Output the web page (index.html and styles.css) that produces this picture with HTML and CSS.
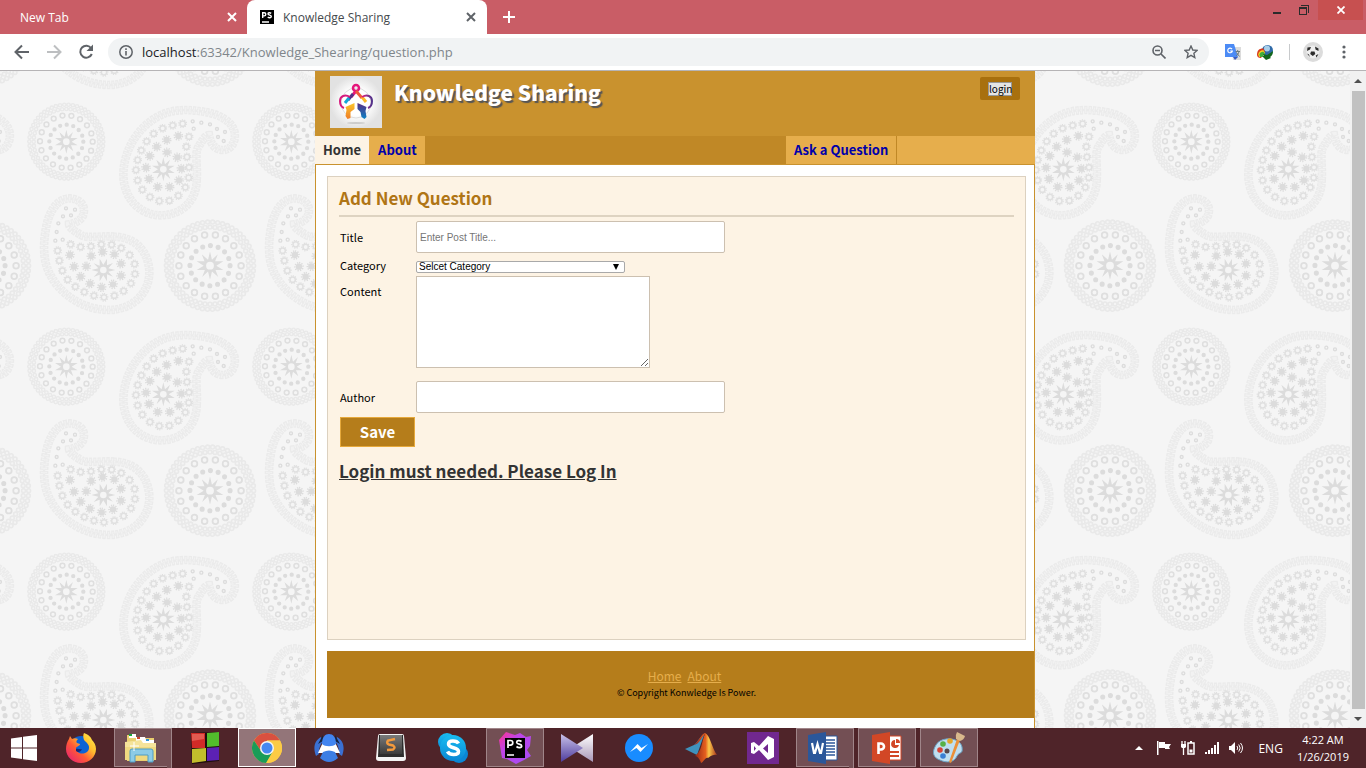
FILE: index.html
```html
<!DOCTYPE html>
<html lang="en">
<head>
<meta charset="utf-8">
<title>Knowledge Sharing</title>
<link rel="stylesheet" href="styles.css">
</head>
<body>
<header class="tabs">
  <div class="tab"><span>New Tab</span>
    <button class="icon-btn tab-close" aria-label="Close New Tab"><svg width="10" height="10" viewBox="0 0 10 10"><path d="M1 1l8 8M9 1L1 9" stroke="#fff" stroke-width="2"/></svg></button>
  </div>
  <div class="tab tab-active">
    <svg class="favicon" width="14" height="14" viewBox="0 0 14 14"><path d="M0 0h14v14H0z"/><path d="M2.700 8V2.700h1.500a1.600 1.600 0 0 1 0 3.200H2.700M11.200 3.400C9.800 2.300 8 2.600 8 3.900c.1 1.500 3.300 1 3.300 2.600 0 1.500-2.300 1.500-3.600.5M2 12h7" fill="none" stroke="#fff" stroke-width="1.400"/></svg>
    <span>Knowledge Sharing</span>
    <button class="icon-btn tab-close" aria-label="Close Knowledge Sharing"><svg width="10" height="10" viewBox="0 0 10 10"><path d="M1 1l8 8M9 1L1 9" stroke="#5f6368" stroke-width="2"/></svg></button>
  </div>
  <button class="icon-btn tab-new" aria-label="New tab"><svg width="12" height="12" viewBox="0 0 12 12"><path d="M6 0v12M0 6h12" stroke="#fff" stroke-width="2"/></svg></button>
  <div class="win-controls">
    <button class="icon-btn win-btn" aria-label="Minimize"><svg width="10" height="12" viewBox="0 0 10 12"><path d="M1 8h8v2H1z" fill="#2b2b2b"/></svg></button>
    <button class="icon-btn win-btn" aria-label="Restore"><svg width="10" height="10" viewBox="0 0 10 10"><path d="M0 2h8v8H0zM1 4v5h6V4zM2 0h8v8H9V1H2z" fill="#2b2b2b" fill-rule="evenodd"/></svg></button>
    <button class="icon-btn win-close" aria-label="Close"><svg width="8" height="8" viewBox="0 0 8 8"><path d="M.5.5l7 7M7.500.5l-7 7" stroke="#fff" stroke-width="1.800"/></svg></button>
  </div>
</header>
<nav class="toolbar" aria-label="Browser">
  <button class="icon-btn tool" aria-label="Back"><svg width="16" height="16" viewBox="0 0 16 16"><path d="M15 8H2M8 1.500L1.500 8 8 14.500" fill="none" stroke="#5f6368" stroke-width="2"/></svg></button>
  <button class="icon-btn tool" aria-label="Forward"><svg width="16" height="16" viewBox="0 0 16 16"><path d="M1 8h13M8 1.500L14.500 8 8 14.500" fill="none" stroke="#bdbfc1" stroke-width="2"/></svg></button>
  <button class="icon-btn tool" aria-label="Reload"><svg width="16" height="16" viewBox="0 0 16 16"><path d="M13.200 4.200A6 6 0 1 0 13.800 10" fill="none" stroke="#5f6368" stroke-width="2"/><path d="M15 .5v6.500H8.500z" fill="#5f6368"/></svg></button>
  <div class="omnibox">
    <svg width="14" height="14" viewBox="0 0 14 14"><circle cx="7" cy="7" r="6.200" fill="none" stroke="#5f6368" stroke-width="1.500"/><path d="M6.200 6h1.600v4.500H6.200zM6.200 3.300h1.600v1.600H6.200z" fill="#5f6368"/></svg>
    <div class="url"><span class="url-host">localhost</span>:63342/Knowledge_Shearing/question.php</div>
    <button class="icon-btn tool" aria-label="Zoom"><svg width="14" height="14" viewBox="0 0 14 14"><circle cx="5.500" cy="5.500" r="4.500" fill="none" stroke="#5f6368" stroke-width="1.600"/><path d="M3 5.500h5M9 9l4.500 4.500" stroke="#5f6368" stroke-width="1.600"/></svg></button>
    <button class="icon-btn tool" aria-label="Bookmark"><svg width="14" height="14" viewBox="0 0 14 14"><path d="M7 1l1.800 4 4.300.4-3.200 2.900.9 4.300L7 10.400l-3.800 2.200.9-4.300L.9 5.400 5.200 5z" fill="none" stroke="#5f6368" stroke-width="1.400"/></svg></button>
  </div>
  <div class="extensions">
    <button class="icon-btn tool" aria-label="Translate"><svg width="16" height="16" viewBox="0 0 16 16"><path d="M6 3h10v13H8z" fill="#dcdcdc"/><path d="M0 0h9l4 13H0z" fill="#4c8bf5"/><path d="M8 13h5l-3 3z" fill="#3a5bbd"/><path d="M7 5.200A2.300 2.300 0 1 0 7.300 7H5.200" fill="none" stroke="#fff" stroke-width="1.200"/><path d="M10.500 7.500H15M12.700 6v1.500M14 7.500c-.4 2-1.500 3.500-3 4.500M11.500 8.500l3 4" fill="none" stroke="#6f7c80" stroke-width="1"/></svg></button>
    <button class="icon-btn tool" aria-label="Download manager"><svg width="16" height="16" viewBox="0 0 16 16"><circle cx="10.500" cy="6.500" r="5.500" fill="#2f6aa8"/><circle cx="10" cy="4.500" r="3" fill="#a9cfea"/><path d="M0 10.500C0 6 3 4 6.500 4.500L8 8l-4 6C1.500 14 0 13 0 10.500z" fill="#d8391b"/><path d="M1.200 10.500C1.500 7.500 4 5.800 6.500 6.200L8 9l-3 4H2z" fill="#f4cf26"/><path d="M2.500 10.500C3 8.500 4.500 7.500 6.500 7.800L8 10l-3 3H3z" fill="#3fae3b"/><path d="M6 10l4 1 6-4c0 3-1 5-3 6l1 1-5 2-4-4 2 0z" fill="#12661c"/></svg></button>
    <span class="divider"></span>
    <button class="icon-btn avatar" aria-label="Profile"><svg width="20" height="20" viewBox="0 0 20 20"><circle cx="10" cy="10" r="10" fill="#dcdcdc"/><circle cx="10" cy="10" r="6.500" fill="#efefef"/><path d="M8 9.500h3.500l.8 2.500-2.500 2-2.600-2zM4.500 5.500L8 5 7 7.500 4 9zM12 4.500l3.500 2V9l-3-1.500zM4 11.500l2 1 .8 2.500zM15.500 12l-2 3.500-.8-2z" fill="#2d2d2d"/></svg></button>
    <button class="icon-btn tool" aria-label="Menu"><svg width="4" height="14" viewBox="0 0 4 14"><circle cx="2" cy="2" r="1.600" fill="#5f6368"/><circle cx="2" cy="7" r="1.600" fill="#5f6368"/><circle cx="2" cy="12" r="1.600" fill="#5f6368"/></svg></button>
  </div>
</nav>
<main class="viewport">
  <svg class="backdrop" aria-hidden="true">
    <defs>
      <path id="burst" d="M0-36L5-15 20-29 13-11 34-11 16 0 34 11 14 11 21 29 5 15 0 36-5 15-20 29-13 11-34 11-16 0-34-11-14-11-21-29-5-15z"/>
      <marker id="ringStar" markerUnits="userSpaceOnUse" markerWidth="28" markerHeight="28" viewBox="-14 -14 28 28" refX="0" refY="0"><circle r="8" fill="#f5f5f5" stroke="#e0e0e0" stroke-width="4.500"/><circle r="11.500" fill="none" stroke="#e0e0e0" stroke-width="4" stroke-dasharray="3.500 3.700"/></marker>
      <marker id="fullStar" markerUnits="userSpaceOnUse" markerWidth="32" markerHeight="32" viewBox="-16 -16 32 32" refX="0" refY="0"><circle r="9.500" fill="#dcdcdc"/><circle r="12" fill="none" stroke="#dcdcdc" stroke-width="5" stroke-dasharray="3.700 3.800"/></marker>
      <marker id="bead" markerUnits="userSpaceOnUse" markerWidth="16" markerHeight="16" viewBox="-8 -8 16 16" refX="0" refY="0"><circle r="4.500" fill="#f5f5f5" stroke="#dcdcdc" stroke-width="4"/></marker>
      <g id="wheel">
        <g fill="none" stroke-linecap="round">
          <circle r="111" stroke="#e9e9e9" stroke-width="14" pathLength="54" stroke-dasharray="0 1"/>
          <circle r="111" stroke="#f4f4f4" stroke-width="6" pathLength="54" stroke-dasharray="0 1"/>
          <circle r="98" stroke="#e9e9e9" stroke-width="14" pathLength="48" stroke-dasharray="0 1"/>
          <circle r="98" stroke="#f4f4f4" stroke-width="6" pathLength="48" stroke-dasharray="0 1"/>
          <circle r="79" stroke="#dfdfdf" stroke-width="19" pathLength="18" stroke-dasharray="0 1"/>
          <circle r="79" stroke="#f5f5f5" stroke-width="10" pathLength="18" stroke-dasharray="0 1"/>
          <circle r="51" stroke="#dcdcdc" stroke-width="13" pathLength="16" stroke-dasharray="0 1"/>
        </g>
        <use href="#burst" fill="#dcdcdc"/><circle r="10" fill="#f5f5f5"/>
      </g>
      <path id="drop" d="M590 330C594 290 582 245 597 228 607 210 618 195 627 195 632 222 645 240 669 240 693 240 708 216 704 188 698 153 655 132 615 126 585 120 555 119 540 121 450 125 372 213 370 312 370 392 426 436 483 436 546 435 590 392 590 330z"/>
      <g id="paisley">
        <g fill="none">
          <use href="#drop" stroke="#ebebeb" stroke-width="26" stroke-dasharray="10 3"/>
          <use href="#drop" stroke="#f5f5f5" stroke-width="4"/>
          <use href="#drop" stroke="#f2f2f2" stroke-width="18" stroke-dasharray="4 9" stroke-dashoffset="-3"/>
          <use href="#drop" stroke="#ebebeb" stroke-width="7" stroke-dasharray="9 4" stroke-dashoffset="5"/>
        </g>
        <path d="M548 161L518 166 488 175 461 191 440 214 424 241 413 270 408 300 413 331 427 359 450 381 478 393 508 392 535 377 556 352 566 323 567 292 561 261 559 230 567 200" fill="none" marker-start="url(#ringStar)" marker-mid="url(#ringStar)" marker-end="url(#ringStar)"/>
        <path d="M535 198L500 210 470 230 449 258 438 293 447 327 473 351 509 351 537 331 544 296 532 262 501 247" fill="none" marker-start="url(#fullStar)" marker-mid="url(#fullStar)" marker-end="url(#fullStar)"/>
        <path d="M581 176L578 154 604 158 630 163 651 177 675 186 671 213 654 201" fill="none" marker-start="url(#bead)" marker-mid="url(#bead)" marker-end="url(#bead)"/>
        <use href="#burst" x="490" y="298" fill="#dcdcdc"/><circle cx="490" cy="298" r="10" fill="#f5f5f5"/>
      </g>
      <g id="motif">
        <use href="#wheel" transform="translate(199 212)"/>
        <use href="#wheel" transform="translate(630 584) scale(1.180)"/>
        <use href="#paisley" y="-3"/>
        <use href="#paisley" transform="translate(310 597) rotate(-90) translate(-490 -298)"/>
      </g>
      <pattern id="tile" width="675" height="675" patternUnits="userSpaceOnUse" patternTransform="scale(.333333)">
        <use href="#motif"/><use href="#motif" x="-675"/><use href="#motif" y="-675"/><use href="#motif" x="-675" y="-675"/>
      </pattern>
    </defs>
    <rect width="100%" height="100%" fill="url(#tile)"/>
  </svg>
  <div class="scroll-area">
    <div class="site">
      <header class="site-header">
        <svg class="logo" width="52" height="52" viewBox="0 0 52 52" role="img" aria-label="Knowledge Sharing logo">
          <defs>
            <radialGradient id="lg"><stop offset=".5" stop-color="#fff"/><stop offset="1" stop-color="#e2e2e2"/></radialGradient>
            <linearGradient id="pk"><stop stop-color="#e5177b"/><stop offset=".5" stop-color="#8c2f8d"/><stop offset="1" stop-color="#51338a"/></linearGradient>
            <linearGradient id="or" x2="0" y2="1"><stop stop-color="#fbc52c"/><stop offset="1" stop-color="#ef7d27"/></linearGradient>
            <linearGradient id="bl" x2="0" y2="1"><stop stop-color="#582d83"/><stop offset="1" stop-color="#0b83c6"/></linearGradient>
          </defs>
          <path d="M0 0h52v52H0z" fill="url(#lg)"/><circle cx="26" cy="27" r="15" fill="none" stroke="#ddd"/>
          <ellipse cx="26" cy="47" rx="9" ry="1" fill="#ccc"/>
          <circle cx="26" cy="12" r="3" fill="none" stroke="#e5177b" stroke-width="2.500"/>
          <path d="M26 15l-5 6" stroke="#e5177b" stroke-width="3"/><path d="M23 18l-5 6" stroke="#51338a" stroke-width="3"/>
          <path d="M26 15l6 7" stroke="#f05a3c" stroke-width="3"/>
          <path d="M32 21l4 5" stroke="#fdb827" stroke-width="3"/><path d="M19 22l-4 5" stroke="#11a7d9" stroke-width="3"/>
          <path d="M20 21c-5-3-10-1-10 4 0 3 1 6 4 7" fill="none" stroke="#d51b7d" stroke-width="2"/>
          <path d="M32 21c5-3 10-1 10 4 0 3-1 6-4 7" fill="none" stroke="url(#pk)" stroke-width="2"/>
          <path d="M24.500 27v6l-4 3v6l-3 1-2-3 1-6-1-3z" fill="url(#or)"/><path d="M27.500 27l9 4-1 4 1 6-2 2-3-2-1-5-3-3z" fill="url(#bl)"/>
        </svg>
        <h1 class="site-title">Knowledge Sharing</h1>
        <div class="login-box"><button class="login-btn" type="button">login</button></div>
      </header>
      <nav class="site-nav" aria-label="Site">
        <a class="nav-item nav-current" href="#home">Home</a>
        <a class="nav-item" href="#about">About</a>
        <div class="nav-side"><a class="nav-item nav-ask" href="#ask">Ask a Question</a></div>
      </nav>
      <div class="site-body">
        <section class="panel">
          <h2 class="panel-title">Add New Question</h2>
          <form class="question-form">
            <label for="title">Title</label>
            <input class="field field-text" id="title" type="text" placeholder="Enter Post Title...">
            <label for="category">Category</label>
            <div class="select-wrap">
              <select class="field-select" id="category"><option>Selcet Category</option></select>
              <svg class="select-arrow" width="6" height="6" viewBox="0 0 6 6"><path d="M0 0h6L3 6z"/></svg>
            </div>
            <label class="label-top" for="content">Content</label>
            <textarea class="field field-area" id="content"></textarea>
            <label for="author">Author</label>
            <input class="field field-text" id="author" type="text">
            <button class="save" type="button">Save</button>
          </form>
          <a class="notice" href="#login">Login must needed. Please Log In</a>
        </section>
        <footer class="site-footer">
          <div class="footer-links"><a href="#home">Home</a><a href="#about">About</a></div>
          <p class="copyright">© Copyright Konwledge Is Power.</p>
        </footer>
      </div>
    </div>
  </div>
  <div class="scrollbar" aria-hidden="true">
    <svg width="8" height="4" viewBox="0 0 8 4"><path d="M0 4l4-4 4 4z" fill="#505050"/></svg>
    <span class="thumb"></span>
    <svg width="8" height="4" viewBox="0 0 8 4"><path d="M0 0h8L4 4z" fill="#505050"/></svg>
  </div>
</main>
<footer class="taskbar">
  <div class="apps">
    <button class="app app-start" aria-label="Start"><svg width="26" height="26" viewBox="0 0 26 26"><path d="M0 3.500L11 2v10.500H0zM12 1.800L26 0v12.500H12zM0 13.500h11V24L0 22.500zM12 13.500h14V26l-14-1.800z" fill="#fff"/></svg></button>
    <button class="app" aria-label="Firefox"><svg width="30" height="30" viewBox="0 0 30 30"><defs><linearGradient id="ff" x1="1" y1="0" x2="0" y2="1"><stop stop-color="#fff44f"/><stop offset=".35" stop-color="#ffbd2e"/><stop offset=".6" stop-color="#ff5a36"/><stop offset="1" stop-color="#e3157f"/></linearGradient></defs><circle cx="15" cy="14" r="11" fill="#0b63d6"/><path d="M18 0c5 2 7 4 8 7 2 2 4 5 4 9 0 8-7 14-15 14S0 24 0 16C0 12 1 9 3 6l1-3 2 3c2-1 4-1 6 0-2 2-2 3-1 4l3 1c0 2-3 2-4 4 0 5 7 8 12 3 3-5-1-8-4-11-1-3-1-5 0-7z" fill="url(#ff)"/><path d="M10 16c2-1 4 1 6 0-1 3-4 4-6 2z" fill="#15287a"/></svg></button>
    <button class="app app-open app-stack" aria-label="File Explorer"><svg width="32" height="30" viewBox="0 0 32 30"><path d="M2 2h8l2 3h17v23H2z" fill="#e9cf70"/><path d="M4 1h7v4H4z" fill="#fff"/><path d="M4 1h3v2H4z" fill="#18a63b"/><path d="M11 4h9l1 3h8v3H11z" fill="#fff"/><path d="M12 4h3v2h-3z" fill="#d2432b"/><path d="M21 6h3v2h-3z" fill="#2f94d8"/><path d="M0 9l16-2 2 3h13v17H0z" fill="#f5e39a"/><path d="M0 14h31v13H0z" fill="#efd980"/><path d="M5 18q0-2 2-2h19q2 0 2 2v11h-5v-7H10v7H5z" fill="#8ccbe6" stroke="#4e9cc4"/><path d="M9 9v9M5 13h9" stroke="#fff"/></svg></button>
    <button class="app" aria-label="Blocks"><svg width="30" height="32" viewBox="0 0 30 32"><path d="M1 1l28-1v29L2 32z" fill="#1e0d0d"/><path d="M1 1h14v15H2z" fill="#d22b27"/><path d="M17 1l12-1v14l-12 1z" fill="#52bd2c"/><path d="M2 17l14-1v13L2 31z" fill="#c2bd2c"/><path d="M17 16l12-1v13l-12 1z" fill="#5c21b4"/><path d="M2 2h12v5L2 9z" fill="#ef7b6e" opacity=".6"/></svg></button>
    <button class="app app-open app-front" aria-label="Chrome"><svg width="30" height="30" viewBox="0 0 30 30"><circle cx="15" cy="15" r="15" fill="#fccb45"/><path d="M2 7.500A15 15 0 0 1 28 7.500H15L9 18z" fill="#d95040"/><path d="M2 7.500A15 15 0 0 0 14 30l7-12-12 0z" fill="#1a9c58"/><path d="M15 15L21 19 14.500 30A15 15 0 0 0 28 7.500H15z" fill="#fccb45"/><circle cx="15" cy="15" r="7" fill="#f4f4f4"/><circle cx="15" cy="15" r="5.500" fill="#4688f1"/></svg></button>
    <button class="app" aria-label="Accelerator"><svg width="30" height="28" viewBox="0 0 30 28"><path d="M7 3C0 7-1 14 2 22l3-2c0-6 1-9 4-13zM23 3c7 4 8 11 5 19l-3-2c0-6-1-9-4-13z" fill="#3a70d2"/><path d="M9 1L4 10l5-3zM21 1l5 9-5-3z" fill="#14233f"/><path d="M10 6L4 19h22L20 6z" fill="#fff"/><path d="M8 10C8 3 11 0 15 0s7 3 7 10c-3 3-11 3-14 0z" fill="#4285f0"/><path d="M9 18q6-3 12 0l3 6q-9 8-18 0z" fill="#3c7ee4"/></svg></button>
    <button class="app" aria-label="Sublime Text"><svg width="30" height="28" viewBox="0 0 30 28"><defs><linearGradient id="sb" x2="0" y2="1"><stop stop-color="#7b7b7b"/><stop offset="1" stop-color="#3b3b3b"/></linearGradient></defs><path d="M2 2q0-2 2-2h22q2 0 2 2l2 22q0 3-3 3H3q-3 0-3-3z" fill="#f4f4f4"/><path d="M3 1h24l1 22H2z" fill="#2d2d2d"/><path d="M4 1h22v19H4z" fill="url(#sb)"/><path d="M19 5l-7 1.500q-2 3 1 4l4 1q3 2 0 4L11 16" fill="none" stroke="#f39a3d" stroke-width="2.500"/></svg></button>
    <button class="app" aria-label="Skype"><svg width="30" height="30" viewBox="0 0 30 30"><defs><linearGradient id="sk" x2="0" y2="1"><stop stop-color="#19bdf1"/><stop offset="1" stop-color="#0a86d4"/></linearGradient></defs><circle cx="9" cy="9" r="9" fill="url(#sk)"/><circle cx="21" cy="21" r="9" fill="#0a86d4"/><circle cx="15" cy="15" r="13" fill="url(#sk)"/><path d="M20.500 10.500c-2-3.500-10-3.500-10 .5 0 4.500 10 3 10 7.500 0 4-9 4-11 0" fill="none" stroke="#fff" stroke-width="3.500"/></svg></button>
    <button class="app app-open" aria-label="PhpStorm"><svg width="32" height="32" viewBox="0 0 32 32"><defs><linearGradient id="ps" x2="1" y2="1"><stop stop-color="#ff318c"/><stop offset=".35" stop-color="#c045e8"/><stop offset="1" stop-color="#a24cf5"/></linearGradient></defs><path d="M0 8L7 0l9 3 5-2 6 4 5-1-1 10-3 4 4 6-7 4-8 4-9-5-5-1z" fill="url(#ps)"/><path d="M6 6h20v20H6z"/><path d="M9 16V8.500h2.500a2.300 2.300 0 0 1 0 4.600H9M22.500 9.500c-2-1.500-5-1-4.800 1 .2 2.200 5 1.200 5 3.500 0 2-3.500 2-5.200.5M8 23h7" fill="none" stroke="#fff" stroke-width="1.700"/></svg></button>
    <button class="app" aria-label="KMPlayer"><svg width="32" height="28" viewBox="0 0 32 28"><defs><linearGradient id="k1" x2="0" y2="1"><stop stop-color="#c9c2e9"/><stop offset="1" stop-color="#4e3c9e"/></linearGradient><linearGradient id="k2" x2="0" y2="1"><stop stop-color="#fff"/><stop offset="1" stop-color="#a897b7"/></linearGradient></defs><path d="M32 0v28L10 14z" fill="url(#k2)"/><path d="M0 0l22 14L0 28z" fill="url(#k1)"/></svg></button>
    <button class="app" aria-label="Messenger"><svg width="28" height="28" viewBox="0 0 28 28"><circle cx="14" cy="14" r="14" fill="#198cff"/><path d="M5 18l7.500-8 4 4L23 10l-7.500 8-4-4z" fill="#fff"/></svg></button>
    <button class="app" aria-label="MATLAB"><svg width="32" height="30" viewBox="0 0 32 30"><defs><linearGradient id="ml"><stop stop-color="#8e2014"/><stop offset=".5" stop-color="#e5601f"/><stop offset=".65" stop-color="#fbc84a"/><stop offset="1" stop-color="#a8321a"/></linearGradient></defs><path d="M0 16l9-4c4-3 6-9 10-10l-7 20-4-2z" fill="#3f92bd"/><path d="M9 12C14 8 16 1 20 0c5 2 7 15 12 22-5-1-7 2-9 3-3-1-4 4-7 5-1-3-3-7-6-7l3-3c4-5 4-12 7-19-3 2-5 10-11 11z" fill="url(#ml)"/></svg></button>
    <button class="app" aria-label="Visual Studio"><svg width="32" height="32" viewBox="0 0 32 32"><path d="M0 0h32v32H0z" fill="#71288f"/><path d="M4 11l3-1 5 4 9-10 6 3v18l-6 3-9-10-5 4-3-1zm3 3v5l2-2.500zm14-2l-5 4.500 5 4.500z" fill="#fff" fill-rule="evenodd"/></svg></button>
    <button class="app app-open app-stack" aria-label="Word"><svg width="30" height="32" viewBox="0 0 30 32"><path d="M16 4h13v24H16z" fill="#fff" stroke="#2b579a"/><path d="M18 8h9M18 11h9M18 14h9M18 17h9M18 20h9M18 23h9" stroke="#2b579a" stroke-width="1.500"/><path d="M0 3l18-3v32L0 29z" fill="#2b579a"/><path d="M4 11l2 10h1l2.500-9 2.500 9h1l2-10" fill="none" stroke="#fff" stroke-width="2.200"/></svg></button>
    <button class="app app-open" aria-label="PowerPoint"><svg width="30" height="32" viewBox="0 0 30 32"><path d="M16 4h13v24H16z" fill="#fff" stroke="#d24726"/><path d="M23 8a4 4 0 1 0 4 5h-4zM24 7v4h4a4 4 0 0 0-4-4zM18 19h9v2h-9zM18 23h9v2h-9z" fill="#d24726"/><path d="M0 3l18-3v32L0 29z" fill="#d24726"/><path d="M6.500 22V11.500H9a3 3 0 0 1 0 6H6.500" fill="none" stroke="#fff" stroke-width="2.600"/></svg></button>
    <button class="app app-open" aria-label="Paint"><svg width="32" height="32" viewBox="0 0 32 32"><path d="M3 13c5-9 24-8 26 2 1 8-2 4-5 9-3 7-11 7-17 4-6-2-9-7-4-15z" fill="#bfdff0" stroke="#6aa2c4"/><circle cx="10" cy="12" r="2.800" fill="#56b146"/><circle cx="17" cy="9" r="2.800" fill="#e5a72a"/><circle cx="7" cy="18" r="2.800" fill="#d84336"/><circle cx="10" cy="24" r="2.800" fill="#3a7fd2"/><circle cx="14" cy="19" r="2.500" fill="#58484c"/><path d="M27 8l-9 23-2-1 8-23z" fill="#eb9038"/><path d="M23 7q-1-4 1-7l8 4q-1 4-5 5z" fill="#d9b98c"/></svg></button>
  </div>
  <div class="tray">
    <svg class="tray-more" width="8" height="4" viewBox="0 0 8 4"><path d="M0 4l4-4 4 4z" fill="#fff"/></svg>
    <svg width="14" height="14" viewBox="0 0 14 14"><path d="M0 0h1.500v14H0zM2 1h6v2h6l-2 3 1 2H8V7H2z" fill="#fff"/></svg>
    <svg width="14" height="14" viewBox="0 0 14 14"><path d="M1 0v3M4 0v3M2.500 6v8" stroke="#fff" stroke-width="1.300"/><path d="M0 3h5v3l-1 1H1L0 6z" fill="#fff"/><path d="M7 2h6v11H7zM9 .7h2" fill="none" stroke="#fff" stroke-width="1.500"/><path d="M8.500 8.500h3v3h-3z" fill="#fff"/></svg>
    <svg width="14" height="12" viewBox="0 0 14 12"><path d="M0 10h2v2H0zM3 8h2v4H3zM6 6h2v6H6zM9 3h2v9H9zM12 0h2v12h-2z" fill="#fff"/></svg>
    <svg width="14" height="12" viewBox="0 0 14 12"><path d="M0 4h2l4-4v12L2 8H0z" fill="#fff"/><path d="M8 4q1.500 2 0 4M9.700 2.500q3 3.500 0 7M11.500 1q4 5 0 10" fill="none" stroke="#fff"/></svg>
    <span class="lang">ENG</span>
    <div class="clock"><time>4:22 AM</time><time>1/26/2019</time></div>
  </div>
</footer>
</body>
</html>
```
FILE: styles.css
```css
* { box-sizing: border-box; }
body {
  margin: 0;
  height: 100vh;
  display: flex;
  flex-direction: column;
  overflow: hidden;
  font-family: "Open Sans", sans-serif;
  font-size: 12px;
}
svg { display: block; flex: none; }
h1, h2, p { margin: 0; }
button { font: inherit; border: 0; padding: 0; }
.icon-btn { display: flex; align-items: center; justify-content: center; background: none; }

/* Browser tabs */
.tabs { display: flex; height: 34px; flex: none; background: #c95d66; color: #fff; }
.tab { display: flex; align-items: center; width: 247px; padding: 0 10px 0 20px; }
.tab-close { margin-left: auto; width: 10px; height: 10px; }
.tab-active { width: 240px; padding: 0 11px 0 13px; background: #fff; color: #45494d; border-radius: 8px 8px 0 0; }
.favicon { margin-right: 9px; }
.tab-new { width: 44px; }
.win-controls { display: flex; margin-left: auto; height: 20px; padding-right: 3px; }
.win-btn { width: 27px; }
.win-close { width: 45px; margin-left: 1px; background: #c75050; }

/* Toolbar */
.toolbar { display: flex; align-items: center; height: 37px; flex: none; padding: 0 6px; background: #fff; border-bottom: 1px solid #b6b4b6; }
.tool { width: 32px; height: 28px; }
.omnibox { display: flex; align-items: center; flex: 1; height: 28px; margin-left: 6px; padding: 0 2px 0 11px; border-radius: 14px; background: #f1f3f4; }
.url { flex: 1; margin-left: 9px; font-size: 13px; color: #80868b; }
.url-host { color: #202124; }
.extensions { display: flex; align-items: center; padding-left: 8px; }
.divider { width: 1px; height: 16px; margin: 0 7px 0 8px; background: #c8cacc; }
.avatar { width: 31px; height: 28px; }

/* Page area */
.viewport { position: relative; display: flex; flex: 1; min-height: 0; background: #f5f5f5; }
.backdrop { position: absolute; inset: 0; width: 100%; height: 100%; }
.scroll-area { position: relative; flex: 1; overflow: hidden; }
.site { max-width: 720px; min-height: 100%; margin: 0 auto; display: flex; flex-direction: column; font-family: "Noto Sans CJK SC", sans-serif; color: #000; }
.site-header { display: flex; align-items: flex-start; height: 65px; padding: 5px 15px; background: #c9922e; }
.site-title { margin-left: 12px; font-size: 21px; line-height: 32px; font-weight: 900; color: #fff; text-shadow: 2px 2px 1px #555; }
.login-box { margin: 1px 0 0 auto; padding: 5px 8px 4px; border-radius: 2px; background: #a8700e; }
.login-btn { display: block; width: 24px; height: 14px; border: 1px solid #999; background: #e4e4e4; font-size: 10px; line-height: 12px; }
.site-nav { display: flex; height: 29px; background: #c08826; border-bottom: 1px solid #c9922e; font-size: 13px; line-height: 28px; font-weight: 700; }
.nav-item { padding: 0 8px; background: #e6ae4c; color: #00a; text-decoration: none; }
.nav-current { background: #fdf3e4; color: #333; border-right: 1px solid #e6ae4c; }
.nav-side { display: flex; width: 249px; margin-left: auto; background: #e6ae4c; }
.nav-ask { border-right: 1px solid #c08826; }
.site-body { flex: 1; padding: 11px 0 10px 11px; background: #fff; border: solid #c9922e; border-width: 0 1px; }
.panel { min-height: 464px; margin-right: 8px; padding: 10px 11px; background: #fdf3e4; border: 1px solid #dcd1c0; }
.panel-title { height: 30px; border-bottom: 2px solid #ded3c1; font-size: 17px; line-height: 22px; color: #b07515; }
.question-form { display: grid; grid-template-columns: 76px 1fr; align-items: center; justify-items: start; padding: 4px 0 0 1px; font-size: 11px; line-height: 16px; }
.field { border: 1px solid #ccc0b0; background: #fff; font: 10px "Liberation Sans", sans-serif; }
.field-text { width: 309px; height: 32px; padding: 0 3px; border-radius: 2px; }
.field-text::placeholder { color: #757575; }
.select-wrap { position: relative; margin: 8px 0 3px; }
.field-select { display: block; appearance: none; width: 209px; height: 12px; padding: 0 2px; border: 1px solid #a9a9a9; border-radius: 2px; background: #fff; color: #000; font: 10px/10px "Liberation Sans", sans-serif; }
.select-arrow { position: absolute; top: 3px; right: 6px; }
.label-top { align-self: start; margin-top: 7px; }
.field-area { width: 234px; height: 92px; margin-bottom: 13px; }
.save { width: 75px; height: 30px; margin-top: 4px; border: 1px solid #e6a93c; background: #b57d1b; color: #fff; font-size: 15px; line-height: 28px; font-weight: 700; }
.notice { display: block; margin-top: 12px; font-size: 17px; line-height: 24px; font-weight: 700; color: #333; }
.site-footer { height: 67px; margin: 11px 0 0; padding-top: 16px; background: #b57d1b; text-align: center; }
.footer-links { display: flex; justify-content: center; gap: 6px; padding-left: 8px; font-size: 12px; line-height: 18px; }
.footer-links a { color: #e6ae4c; }
.copyright { padding-left: 12px; font-size: 9px; line-height: 16px; }
.scrollbar { position: relative; display: flex; flex-direction: column; align-items: center; gap: 8px; width: 16px; padding: 8px 0 7px; background: #f1f1f1; }
.thumb { flex: 1; width: 13px; background: #c1c1c1; }

/* Taskbar */
.taskbar { display: flex; justify-content: space-between; height: 40px; flex: none; background: #4f2429; color: #fff; }
.apps { display: flex; gap: 4px; }
.app { position: relative; display: flex; align-items: center; justify-content: center; width: 58px; background: none; }
.app-start { width: 48px; }
.app-open { height: 39px; border: 1px solid #a08589; background: #734f54; }
.app-front { border-color: #fff; background: #937579; }
.app-stack { width: 54px; margin-right: 4px; }
.app-stack::after { content: ""; position: absolute; top: -1px; right: -5px; width: 4px; height: 39px; border: 1px solid #a08589; border-left: 0; background: #734f54; }
.tray { display: flex; align-items: center; gap: 10px; padding-right: 17px; }
.tray-more { margin-right: 4px; }
.lang { margin-left: 5px; }
.clock { display: flex; flex-direction: column; align-items: center; margin-left: 4px; font-size: 11px; line-height: 17px; }
```
